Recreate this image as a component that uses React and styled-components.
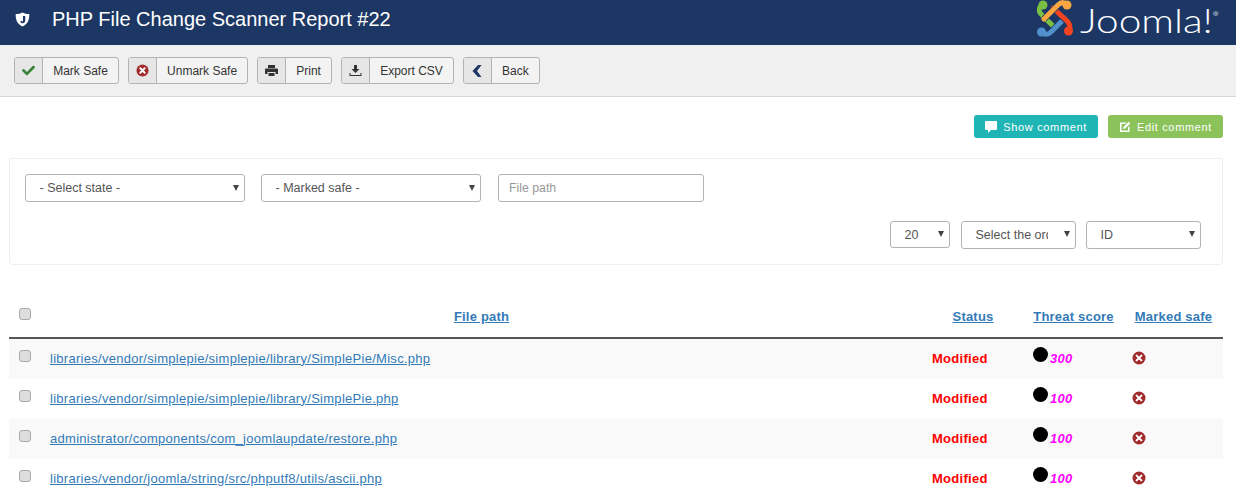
import React from 'react';
import styled, { createGlobalStyle } from 'styled-components';
import { FaCheck } from 'react-icons/fa';

const arrow = "data:image/svg+xml,%3Csvg xmlns='http://www.w3.org/2000/svg' width='6' height='6'%3E%3Cpath d='M0 0h6L3 6z' fill='%23444'/%3E%3C/svg%3E";

const Global = createGlobalStyle`
  html, body { margin: 0; padding: 0; background: #fff; overflow: hidden; }
  body { font-family: "Liberation Sans", Arial, sans-serif; font-size: 13px; color: #555; }
`;

const Page = styled.div`
  width: 1236px;
  height: 495px;
  overflow: hidden;
`;

const Header = styled.header`
  height: 45px;
  background: #1c3764;
  display: flex;
  align-items: flex-start;
  color: #fff;
`;

const ShieldBox = styled.div`
  width: 52px;
  height: 38px;
  flex: none;
  display: flex;
  align-items: center;
  padding-left: 15px;
  box-sizing: border-box;
`;

const Title = styled.h1`
  flex: 1;
  margin: 0;
  font-size: 20px;
  font-weight: 400;
  line-height: 38px;
`;

const LogoBox = styled.div`
  width: 199px;
  height: 38px;
  flex: none;
  display: flex;
  align-items: flex-start;
  gap: 6px;
`;

const LogoWord = styled.span`
  font-family: Lato, "Open Sans", sans-serif;
  font-weight: 300;
  font-size: 33px;
  line-height: 40px;
  color: #fff;
  white-space: nowrap;
  transform: scaleX(1.23);
  transform-origin: left center;
`;

const LogoMark = styled.span`
  font-size: 6px;
  line-height: 0;
  vertical-align: 17px;
  font-family: "Liberation Sans", sans-serif;
`;

const Toolbar = styled.div`
  height: 51px;
  background: #f0f0f0;
  border-bottom: 1px solid #d6d6d6;
  display: flex;
  align-items: center;
  gap: 9px;
  padding: 0 14px;
`;

const ToolButton = styled.button`
  height: 27px;
  padding: 0;
  margin: 0;
  display: flex;
  align-items: stretch;
  background: #f3f3f3;
  border: 1px solid #b3b3b3;
  border-radius: 3px;
  font-family: inherit;
  font-size: 12px;
  color: #333;
`;

const ToolIcon = styled.span`
  width: 28.2px;
  box-sizing: border-box;
  background: #e6e6e6;
  border-right: 1px solid #b3b3b3;
  display: flex;
  align-items: center;
  justify-content: center;
  color: ${p => p.$color || '#333'};
  border-radius: 2px 0 0 2px;
`;

const ToolLabel = styled.span`
  padding: 1px 10px 0;
  line-height: 25px;
`;

const CommentBar = styled.div`
  display: flex;
  justify-content: flex-end;
  gap: 10px;
  padding: 18px 13px 0 0;
`;

const CommentButton = styled.button`
  height: 23px;
  border: 0;
  border-radius: 3px;
  background: ${p => p.$bg};
  color: #fff;
  font-family: inherit;
  font-size: 11px;
  letter-spacing: 0.65px;
  display: flex;
  align-items: center;
  gap: 6px;
  padding: 0 11px;
`;

const FilterPanel = styled.div`
  margin: 20px 13px 0 9px;
  height: 107px;
  box-sizing: border-box;
  border: 1px solid #efefef;
  border-radius: 3px;
  padding: 15px 21px 0 15px;
  display: flex;
  flex-direction: column;
  gap: 19px;
`;

const FilterRow = styled.div`
  display: flex;
  justify-content: ${p => p.$end ? 'flex-end' : 'flex-start'};
  gap: ${p => p.$gap}px;
`;

const Select = styled.select`
  appearance: none;
  width: ${p => p.$w}px;
  height: ${p => p.$h || 28}px;
  box-sizing: border-box;
  margin-right: ${p => p.$after || 0}px;
  background: #fff url("${arrow}") no-repeat right 5px center;
  background-position-y: ${p => p.$raised ? 'calc(50% - 1px)' : '50%'};
  border: 1px solid #b3b3b3;
  border-radius: 3px;
  padding: 0 27px 0 13.5px;
  font-family: inherit;
  font-size: 12.5px;
  color: #555;
`;

const TextInput = styled.input`
  width: 206px;
  height: 28px;
  box-sizing: border-box;
  margin-left: 1px;
  border: 1px solid #b3b3b3;
  border-radius: 3px;
  padding: 0 10px;
  font-family: inherit;
  font-size: 12.3px;
  &::placeholder { color: #999; opacity: 1; }
`;

const Table = styled.table`
  width: 1214px;
  margin: 32px 0 0 9px;
  border-collapse: separate;
  border-spacing: 0;
  table-layout: fixed;
  letter-spacing: 0.28px;
  font-size: 13px;
`;

const HeadCell = styled.th`
  height: 42px;
  box-sizing: border-box;
  padding: 0 ${p => p.$shift || 0}px 2px 0;
  text-align: ${p => p.$align || 'center'};
  border-bottom: 2px solid #555;
  font-weight: 700;
  font-size: 13px;
  letter-spacing: 0.2px;
`;

const SortLink = styled.a`
  color: #337ab7;
  text-decoration: underline;
`;

const Row = styled.tr`
  height: 40px;
  background: ${p => p.$striped ? '#f9f9f9' : '#fff'};
`;

const Cell = styled.td`
  padding: 0 0 2px ${p => p.$pad || 0}px;
  vertical-align: middle;
`;

const PathLink = styled.a`
  color: #337ab7;
  text-decoration: underline;
`;

const Check = styled.input.attrs({ type: 'checkbox' })`
  appearance: none;
  display: block;
  width: 12px;
  height: 12px;
  margin: 0 0 ${p => p.$lift}px 10px;
  background: #ddd;
  border: 1px solid #aaa;
  border-radius: 3px;
`;

const Modified = styled.span`
  color: #f00;
  font-weight: 700;
`;

const Threat = styled.div`
  display: flex;
  align-items: center;
  gap: 2px;
`;

const Dot = styled.span`
  flex: none;
  width: 15px;
  height: 15px;
  margin-bottom: 7px;
  border-radius: 50%;
  background: #000;
`;

const Score = styled.span`
  color: #f0f;
  font-weight: 700;
  font-style: italic;
`;

const IconSlot = styled.span`
  display: flex;
`;

const XIcon = ({ size = 14 }) => (
  <svg width={size} height={size} viewBox="0 0 14 14" aria-hidden="true">
    <circle cx="7" cy="7" r="6.5" fill="#a12c2c" />
    <path d="M4.600 4.600l4.800 4.800M9.400 4.600l-4.800 4.800" stroke="#fff" strokeWidth="2" strokeLinecap="round" />
  </svg>
);

const DownloadIcon = () => (
  <svg width="13" height="13" viewBox="0 0 13 13" aria-hidden="true">
    <path d="M5 1h3v4h2.500L6.500 9 2.500 5H5z" fill="#333" />
    <path d="M.5 9v3h12V9h-1v2h-10V9z" fill="#333" />
  </svg>
);

const PrintIcon = () => (
  <svg width="13" height="12" viewBox="0 0 13 12" aria-hidden="true">
    <path d="M3 0h7v3H3z" fill="#333" />
    <path d="M1 3.500h11a1 1 0 0 1 1 1V9h-2.500V7h-8v2H0V4.500a1 1 0 0 1 1-1z" fill="#333" />
    <path d="M3.500 8h6v3h-6z" fill="#333" />
  </svg>
);

const BackIcon = () => (
  <svg width="10" height="12" viewBox="0 0 10 12" aria-hidden="true">
    <path d="M6 0h3.500L5 6l4.500 6H6L.5 6z" fill="#1c3764" />
  </svg>
);

const CommentIcon = () => (
  <svg width="12" height="12" viewBox="0 0 12 12" aria-hidden="true">
    <path d="M0 1a1 1 0 0 1 1-1h10a1 1 0 0 1 1 1v7a1 1 0 0 1-1 1H6l-3 3V9H1a1 1 0 0 1-1-1z" fill="#fff" />
  </svg>
);

const EditIcon = () => (
  <svg width="12" height="12" viewBox="0 0 12 12" aria-hidden="true">
    <path d="M1 1.500h6.500L6 3H2.500v6.500H9V6.500L10.500 5v6H1z" fill="#fff" />
    <path d="M4.500 5.800L9.600.7l1.700 1.700-5.100 5.100-2 .4z" fill="#fff" />
  </svg>
);

const ShieldIcon = () => (
  <svg width="15" height="15" viewBox="0 0 15 15" aria-hidden="true">
    <path d="M7.500 .5C5.500 1.600 3 2 .7 2c-.2 5.500 1.500 10 6.800 12.500C12.800 12 14.500 7.500 14.300 2 12 2 9.500 1.600 7.500 .5z" fill="#fff" />
    <path d="M8 4h2.200v4.800c0 1.600-1.100 2.400-2.500 2.400-1.100 0-2.100-.6-2.500-1.500l1.500-.9c.2.400.5.700.9.700.3 0 .4-.2.400-.8z" fill="#1c3764" />
  </svg>
);

const arms = [
  ['M6 5C2 6 1 11 4 14L18 28', '#7ac143'],
  ['M4.500 32C7 35 11 35 14 32L28 18', '#5091cd'],
  ['M31.500 31C34 28 33 25 31 22L16 8', '#f44321'],
  ['M30 5C27 2 24 2 21 5L7 19', '#f9a541'],
];

const JoomlaMark = () => (
  <svg width="37" height="38" viewBox="0 0 37 38" aria-hidden="true" fill="none" strokeLinecap="round">
    {arms.map(([d, c]) => (
      <g key={c}>
        <path d={d} stroke="#1c3764" strokeWidth="6.500" strokeLinecap="butt" />
        <path d={d} stroke={c} strokeWidth="5" />
      </g>
    ))}
    <circle cx="6" cy="5" r="4.500" fill="#7ac143" />
    <circle cx="30" cy="5" r="4.500" fill="#f9a541" />
    <circle cx="4.500" cy="32" r="4.500" fill="#5091cd" />
    <circle cx="31.500" cy="31" r="4.500" fill="#f44321" />
  </svg>
);

const rows = [
  ['libraries/vendor/simplepie/simplepie/library/SimplePie/Misc.php', '300'],
  ['libraries/vendor/simplepie/simplepie/library/SimplePie.php', '100'],
  ['administrator/components/com_joomlaupdate/restore.php', '100'],
  ['libraries/vendor/joomla/string/src/phputf8/utils/ascii.php', '100'],
];

export default function App() {
  return (
    <Page>
      <Global />
      <Header>
        <ShieldBox><ShieldIcon /></ShieldBox>
        <Title>PHP File Change Scanner Report #22</Title>
        <LogoBox>
          <JoomlaMark />
          <LogoWord>Joomla!<LogoMark>®</LogoMark></LogoWord>
        </LogoBox>
      </Header>
      <Toolbar>
        <ToolButton><ToolIcon $color="#378137"><FaCheck size={13} /></ToolIcon><ToolLabel>Mark Safe</ToolLabel></ToolButton>
        <ToolButton><ToolIcon><XIcon size={13} /></ToolIcon><ToolLabel>Unmark Safe</ToolLabel></ToolButton>
        <ToolButton><ToolIcon><PrintIcon /></ToolIcon><ToolLabel>Print</ToolLabel></ToolButton>
        <ToolButton><ToolIcon><DownloadIcon /></ToolIcon><ToolLabel>Export CSV</ToolLabel></ToolButton>
        <ToolButton><ToolIcon><BackIcon /></ToolIcon><ToolLabel>Back</ToolLabel></ToolButton>
      </Toolbar>
      <CommentBar>
        <CommentButton $bg="#1fb5b5"><CommentIcon />Show comment</CommentButton>
        <CommentButton $bg="#8bc25a"><EditIcon />Edit comment</CommentButton>
      </CommentBar>
      <FilterPanel>
        <FilterRow $gap={16}>
          <Select $w={220}><option>- Select state -</option></Select>
          <Select $w={220}><option>- Marked safe -</option></Select>
          <TextInput placeholder="File path" />
        </FilterRow>
        <FilterRow $end $gap={10}>
          <Select $w={60} $h={27} $after={1} $raised><option>20</option></Select>
          <Select $w={115} $h={28} $raised><option>Select the ordering</option></Select>
          <Select $w={115} $h={28} $raised><option>ID</option></Select>
        </FilterRow>
      </FilterPanel>
      <Table>
        <colgroup>
          <col style={{ width: 33 }} />
          <col style={{ width: 879 }} />
          <col style={{ width: 104 }} />
          <col style={{ width: 99 }} />
          <col style={{ width: 99 }} />
        </colgroup>
        <thead>
          <tr>
            <HeadCell $align="left"><Check $lift={4} /></HeadCell>
            <HeadCell><SortLink>File path</SortLink></HeadCell>
            <HeadCell><SortLink>Status</SortLink></HeadCell>
            <HeadCell $shift={2}><SortLink>Threat score</SortLink></HeadCell>
            <HeadCell><SortLink>Marked safe</SortLink></HeadCell>
          </tr>
        </thead>
        <tbody>
          {rows.map(([path, score], i) => (
            <Row key={path} $striped={i % 2 === 0}>
              <Cell><Check $lift={4} /></Cell>
              <Cell $pad={8}><PathLink>{path}</PathLink></Cell>
              <Cell $pad={11}><Modified>Modified</Modified></Cell>
              <Cell $pad={8}><Threat><Dot /><Score>{score}</Score></Threat></Cell>
              <Cell $pad={8}><IconSlot><XIcon /></IconSlot></Cell>
            </Row>
          ))}
        </tbody>
      </Table>
    </Page>
  );
}
